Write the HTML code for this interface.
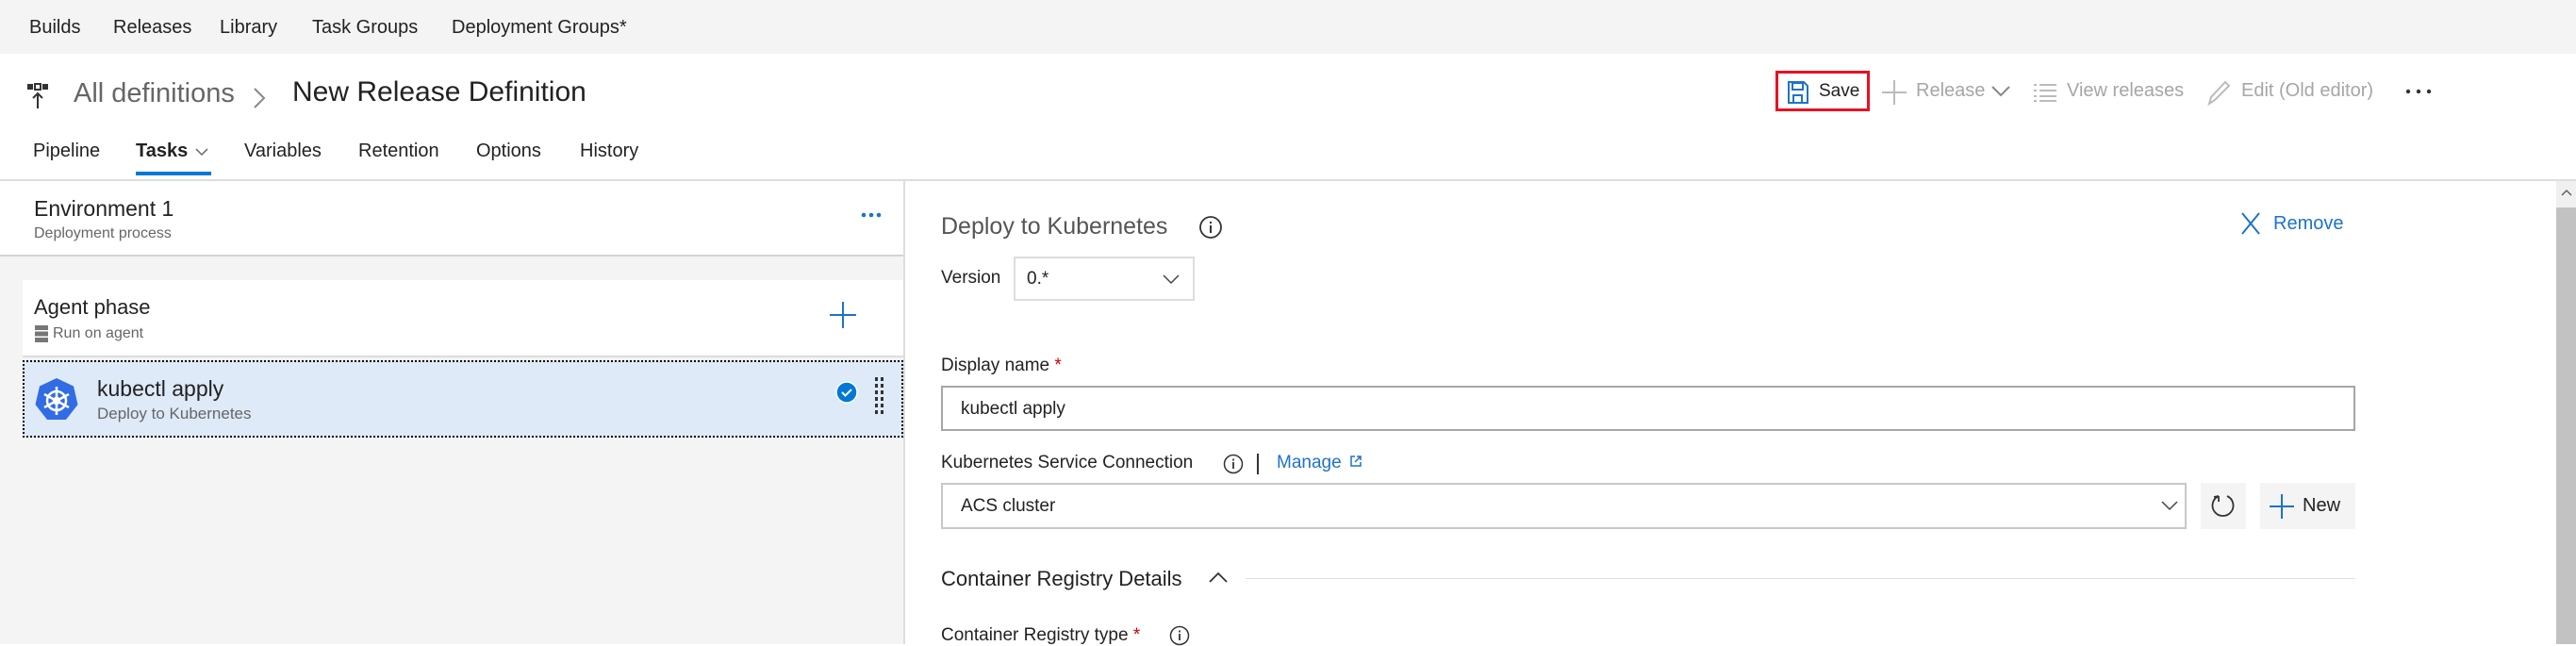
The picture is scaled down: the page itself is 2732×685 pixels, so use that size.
<!DOCTYPE html>
<html><head><meta charset="utf-8"><style>
*{margin:0;padding:0;box-sizing:border-box}
body{width:2732px;height:683px;overflow:hidden;background:#fff;font-family:"Liberation Sans",sans-serif;color:#333;position:relative}
.a{position:absolute;white-space:nowrap}
</style></head><body>
<div class="a" style="left:0;top:0;width:2732px;height:57px;background:#f4f4f4"></div>
<div class="a" style="top:18px;left:31px;font-size:20px;color:#222">Builds</div>
<div class="a" style="top:18px;left:120px;font-size:20px;color:#222">Releases</div>
<div class="a" style="top:18px;left:233px;font-size:20px;color:#222">Library</div>
<div class="a" style="top:18px;left:331px;font-size:20px;color:#222">Task Groups</div>
<div class="a" style="top:18px;left:479px;font-size:20px;color:#222">Deployment Groups*</div>
<svg class="a" style="left:28px;top:88px" width="26" height="28" viewBox="0 0 26 28"><rect x="1" y="1" width="6" height="6" fill="#333"/><rect x="9" y="1" width="6" height="6" fill="none" stroke="#333" stroke-width="2"/><rect x="17" y="1" width="6" height="6" fill="#333"/><path d="M12 27V11M7 16l5-5 5 5" stroke="#333" stroke-width="2" fill="none"/></svg>
<div class="a" style="top:83px;left:78px;font-size:29px;color:#666">All definitions</div>
<svg class="a" style="left:268px;top:92px" width="14" height="24"><path d="M2 2l10 10-10 10" stroke="#888" stroke-width="2" fill="none"/></svg>
<div class="a" style="top:81px;left:310px;font-size:30px;color:#222">New Release Definition</div>
<div class="a" style="left:1883px;top:75px;width:100px;height:43px;border:3px solid #e81123"></div>
<svg class="a" style="left:1896px;top:86px" width="22" height="24" viewBox="0 0 22 24"><path d="M1 1h16l4 4v18H1z" fill="none" stroke="#1e73c8" stroke-width="2"/><rect x="5" y="2" width="11" height="7" fill="none" stroke="#1e73c8" stroke-width="2"/><rect x="6" y="15" width="9" height="8" fill="none" stroke="#1e73c8" stroke-width="2"/></svg>
<div class="a" style="top:86px;left:1929px;font-size:19px;color:#222">Save</div>
<svg class="a" style="left:1996px;top:85px" width="26" height="26"><path d="M13 0v26M0 13h26" stroke="#bbb" stroke-width="2"/></svg>
<div class="a" style="top:85px;left:2032px;font-size:20px;color:#a6a6a6">Release</div>
<svg class="a" style="left:2112px;top:91px" width="20" height="12"><path d="M1 1l9 9 9-9" stroke="#888" stroke-width="2" fill="none"/></svg>
<svg class="a" style="left:2157px;top:88px" width="24" height="20"><path d="M0 2h3M0 8h3M0 14h3M0 19h3M6 2h18M6 8h18M6 14h18M6 19h18" stroke="#bbb" stroke-width="2"/></svg>
<div class="a" style="top:85px;left:2192px;font-size:20px;color:#a6a6a6">View releases</div>
<svg class="a" style="left:2340px;top:84px" width="26" height="28"><path d="M3 26l2-7L20 3l4 4L9 22z" stroke="#bbb" stroke-width="2" fill="none"/></svg>
<div class="a" style="top:85px;left:2377px;font-size:20px;color:#a6a6a6">Edit (Old editor)</div>
<svg class="a" style="left:2551px;top:94px" width="30" height="6"><circle cx="3" cy="3" r="2.2" fill="#333"/><circle cx="14" cy="3" r="2.2" fill="#333"/><circle cx="25" cy="3" r="2.2" fill="#333"/></svg>
<div class="a" style="top:149px;left:35px;font-size:20px;color:#222">Pipeline</div>
<div class="a" style="top:149px;left:144px;font-size:20px;color:#222;font-weight:bold">Tasks</div>
<svg class="a" style="left:207px;top:157px" width="14" height="9"><path d="M1 1l6 6 6-6" stroke="#666" stroke-width="1.5" fill="none"/></svg>
<div class="a" style="left:144px;top:182px;width:80px;height:4px;background:#0078d7"></div>
<div class="a" style="top:149px;left:259px;font-size:20px;color:#222">Variables</div>
<div class="a" style="top:149px;left:380px;font-size:20px;color:#222">Retention</div>
<div class="a" style="top:149px;left:505px;font-size:20px;color:#222">Options</div>
<div class="a" style="top:149px;left:615px;font-size:20px;color:#222">History</div>
<div class="a" style="left:0;top:190px;width:2732px;height:2px;background:#ddd"></div>
<div class="a" style="left:0;top:192px;width:960px;height:491px;background:#f4f4f4;border-right:2px solid #ddd"></div>
<div class="a" style="left:0;top:192px;width:958px;height:80px;background:#fff;border-bottom:2px solid #d4d4d4"></div>
<div class="a" style="top:208px;left:36px;font-size:23px;color:#222">Environment 1</div>
<div class="a" style="top:239px;left:36px;font-size:16px;color:#666">Deployment process</div>
<svg class="a" style="left:913px;top:225px" width="22" height="6"><circle cx="3" cy="3" r="2.3" fill="#1e73c8"/><circle cx="11" cy="3" r="2.3" fill="#1e73c8"/><circle cx="19" cy="3" r="2.3" fill="#1e73c8"/></svg>
<div class="a" style="left:24px;top:297px;width:934px;height:82px;background:#fff;border-bottom:2px solid #ddd"></div>
<div class="a" style="top:313px;left:36px;font-size:22px;color:#222">Agent phase</div>
<svg class="a" style="left:37px;top:345px" width="14" height="18"><rect x="0" y="0" width="14" height="5" fill="#777"/><rect x="0" y="6.5" width="14" height="5" fill="#777"/><rect x="0" y="13" width="14" height="5" fill="#777"/></svg>
<div class="a" style="top:345px;left:56px;font-size:16px;color:#666">Run on agent</div>
<svg class="a" style="left:880px;top:320px" width="28" height="28"><path d="M14 0v28M0 14h28" stroke="#1e73c8" stroke-width="2"/></svg>
<div class="a" style="left:24px;top:382px;width:934px;height:82px;background:#deeaf7;border:2px dotted #000"></div>
<svg class="a" style="left:36px;top:400px" width="48" height="48" viewBox="0 0 48 48"><path d="M24 1l18 8.5 4.5 19.5L34 45H14L1.5 29 6 9.5z" fill="#326ce5"/><g stroke="#fff" stroke-width="2.5" fill="none"><circle cx="24" cy="25" r="10"/><circle cx="24" cy="25" r="3" fill="#fff"/><path d="M24 10v30M11 18l26 14M11 32l26-14"/></g></svg>
<div class="a" style="top:399px;left:103px;font-size:23px;color:#222">kubectl apply</div>
<div class="a" style="top:429px;left:103px;font-size:17px;color:#666">Deploy to Kubernetes</div>
<svg class="a" style="left:886px;top:404px" width="24" height="24"><circle cx="12" cy="12" r="11" fill="#0078d7" stroke="#fff" stroke-width="1.5"/><path d="M7 12l3.5 3.5L17 9" stroke="#fff" stroke-width="2" fill="none"/></svg>
<svg class="a" style="left:928px;top:400px" width="10" height="42"><g fill="#333"><rect x="0" y="0" width="3" height="4"/><rect x="6" y="0" width="3" height="4"/><rect x="0" y="7" width="3" height="4"/><rect x="6" y="7" width="3" height="4"/><rect x="0" y="14" width="3" height="4"/><rect x="6" y="14" width="3" height="4"/><rect x="0" y="21" width="3" height="4"/><rect x="6" y="21" width="3" height="4"/><rect x="0" y="28" width="3" height="4"/><rect x="6" y="28" width="3" height="4"/><rect x="0" y="35" width="3" height="4"/><rect x="6" y="35" width="3" height="4"/></g></svg>
<div class="a" style="left:2711px;top:192px;width:21px;height:491px;background:#c2c2c2"></div>
<div class="a" style="left:2711px;top:192px;width:21px;height:28px;background:#f0f0f0"></div>
<svg class="a" style="left:2716px;top:200px" width="12" height="8"><path d="M1 7l5-5 5 5" stroke="#555" stroke-width="1.3" fill="none"/></svg>
<div class="a" style="top:226px;left:998px;font-size:25px;color:#555">Deploy to Kubernetes</div>
<svg class="a" style="left:1271px;top:228px" width="26" height="26"><circle cx="13" cy="13" r="11" stroke="#333" stroke-width="1.8" fill="none"/><path d="M13 11v8M13 7v2" stroke="#333" stroke-width="2"/></svg>
<svg class="a" style="left:2377px;top:225px" width="20" height="24"><path d="M1 1l18 22M19 1L1 23" stroke="#1e73c8" stroke-width="2"/></svg>
<div class="a" style="top:226px;left:2411px;font-size:20px;color:#1e73c8">Remove</div>
<div class="a" style="top:284px;left:998px;font-size:19px;color:#222">Version</div>
<div class="a" style="left:1075px;top:272px;width:192px;height:47px;border:2px solid #ddd"></div>
<div class="a" style="top:285px;left:1089px;font-size:19px;color:#222">0.*</div>
<svg class="a" style="left:1233px;top:291px" width="18" height="11"><path d="M1 1l8 8 8-8" stroke="#444" stroke-width="1.5" fill="none"/></svg>
<div class="a" style="top:377px;left:998px;font-size:19px;color:#222">Display name <span style="color:#c00">*</span></div>
<div class="a" style="left:998px;top:409px;width:1500px;height:48px;border:2px solid #a6a6a6"></div>
<div class="a" style="top:423px;left:1019px;font-size:19px;color:#222">kubectl apply</div>
<div class="a" style="top:480px;left:998px;font-size:19px;color:#222">Kubernetes Service Connection</div>
<svg class="a" style="left:1297px;top:481px" width="22" height="22"><circle cx="11" cy="11" r="9.5" stroke="#333" stroke-width="1.5" fill="none"/><path d="M11 9v7M11 5.5v2" stroke="#333" stroke-width="1.8"/></svg>
<div class="a" style="left:1333px;top:481px;width:1.5px;height:22px;background:#333"></div>
<div class="a" style="top:480px;left:1354px;font-size:19px;color:#1e73c8">Manage</div>
<svg class="a" style="left:1432px;top:483px" width="12" height="12"><path d="M5 1H1v10h10V7M7 1h4v4M11 1L5 7" stroke="#1e73c8" stroke-width="1.5" fill="none"/></svg>
<div class="a" style="left:998px;top:512px;width:1321px;height:49px;border:2px solid #c8c8c8"></div>
<div class="a" style="top:526px;left:1019px;font-size:19px;color:#222">ACS cluster</div>
<svg class="a" style="left:2292px;top:531px" width="18" height="11"><path d="M1 1l8 8 8-8" stroke="#444" stroke-width="1.5" fill="none"/></svg>
<div class="a" style="left:2334px;top:512px;width:48px;height:49px;background:#f4f4f4"></div>
<svg class="a" style="left:2344px;top:522px" width="28" height="30"><path d="M9 4A11 11 0 1 0 18 4M9 4L9 10M9 4L4 5" stroke="#333" stroke-width="1.8" fill="none"/></svg>
<div class="a" style="left:2397px;top:512px;width:101px;height:49px;background:#f4f4f4"></div>
<svg class="a" style="left:2407px;top:524px" width="26" height="26"><path d="M13 0v26M0 13h26" stroke="#1e73c8" stroke-width="2"/></svg>
<div class="a" style="top:525px;left:2442px;font-size:20px;color:#222">New</div>
<div class="a" style="top:601px;left:998px;font-size:22px;color:#222">Container Registry Details</div>
<svg class="a" style="left:1282px;top:606px" width="20" height="12"><path d="M1 11l9-9 9 9" stroke="#333" stroke-width="1.8" fill="none"/></svg>
<div class="a" style="left:1321px;top:613px;width:1177px;height:1px;background:#e0e0e0"></div>
<div class="a" style="top:663px;left:998px;font-size:19px;color:#222">Container Registry type <span style="color:#c00">*</span></div>
<svg class="a" style="left:1240px;top:663px" width="22" height="22"><circle cx="11" cy="11" r="9.5" stroke="#333" stroke-width="1.5" fill="none"/><path d="M11 9v7M11 5.5v2" stroke="#333" stroke-width="1.8"/></svg>
</body></html>
